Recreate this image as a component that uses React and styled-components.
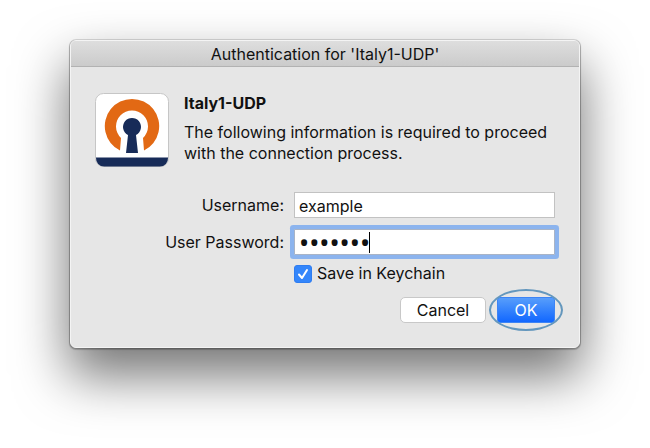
import React, { useState } from "react";
import styled, { createGlobalStyle } from "styled-components";

const GlobalStyle = createGlobalStyle`
  *, *::before, *::after { box-sizing: border-box; }
  body {
    margin: 0;
    background: #ffffff;
    color: #111111;
    font: 16px/21px Inter, "Liberation Sans", sans-serif;
  }
  input, button { font: inherit; color: inherit; }
`;

const Desktop = styled.main`
  min-height: 100vh;
  padding: 40px 70px 99px;
`;

const Dialog = styled.section`
  background: #e6e6e6;
  border-radius: 6px;
  overflow: hidden;
  border: 1px solid #f4f4f4;
  box-shadow:
    0 0 0 1px rgba(0, 0, 0, 0.12),
    0 1px 1px 1px rgba(0, 0, 0, 0.2),
    0 26px 52px 2px rgba(0, 0, 0, 0.54);
`;

const TitleBar = styled.header`
  display: flex;
  align-items: center;
  justify-content: center;
  height: 26px;
  padding-top: 1px;
  background: linear-gradient(#dedede, #cbcbcb);
  border-bottom: 1px solid #b2b2b2;
`;

const Title = styled.h1`
  margin: 0;
  font-size: 16px;
  font-weight: 400;
`;

const Body = styled.div`
  padding: 26px 24px 24px;
`;

const Intro = styled.div`
  display: flex;
  gap: 15px;
`;

const Logo = styled.svg`
  flex: none;
  display: block;
  width: 74px;
  height: 75px;
`;

const Heading = styled.h2`
  margin: 0 0 8px;
  font-size: 16px;
  font-weight: 700;
`;

const Message = styled.p`
  margin: 0;
`;

const Form = styled.form`
  margin-top: 24px;
`;

const Fields = styled.div`
  display: grid;
  grid-template-columns: 189px 1fr;
  gap: 11px 10px;
  align-items: center;
`;

const Label = styled.label`
  text-align: right;
`;

const Field = styled.div`
  position: relative;
`;

const TextInput = styled.input`
  display: block;
  width: 100%;
  height: 26px;
  padding: 2px 4px 0;
  border: 1px solid #c2c2c2;
  background: #ffffff;
  outline: none;
  border-radius: 0;
`;

const PasswordInput = styled(TextInput)`
  padding-top: 0;
  font-family: "Noto Sans", sans-serif;
  font-size: 27px;
  border-color: #a9b4c6;
  border-radius: 1px;
  box-shadow: 0 0 0 4px #8cb4ee;
`;

const Caret = styled.span`
  position: absolute;
  left: 75px;
  top: 3px;
  width: 1px;
  height: 21px;
  background: #000000;
`;

const CheckRow = styled.label`
  display: flex;
  align-items: center;
  gap: 5px;
  margin: 8px 0 0 199px;
`;

const CheckBox = styled.span`
  display: grid;
  width: 18px;
  height: 18px;

  > * { grid-area: 1 / 1; }
`;

const CheckInput = styled.input`
  appearance: none;
  width: 18px;
  height: 18px;
  margin: 0;
  border-radius: 3px;
  border: 1px solid #b8b8b8;
  background: #ffffff;

  &:checked {
    border-color: #2f7df0;
    background: #3486fb;
  }
  &:not(:checked) + svg { display: none; }
`;

const Tick = styled.svg`
  width: 18px;
  height: 18px;
  pointer-events: none;
`;

const Actions = styled.div`
  display: flex;
  justify-content: flex-end;
  gap: 11px;
  margin-top: 13px;
`;

const Button = styled.button`
  width: ${(p) => (p.$primary ? 58 : 86)}px;
  height: 26px;
  padding: 0;
  border-radius: ${(p) => (p.$primary ? 3 : 5)}px;
  border: 1px solid ${(p) => (p.$primary ? "#3d84f5" : "#c8c8c8")};
  background: ${(p) => (p.$primary ? "linear-gradient(#5aa0fb, #0f65ff)" : "#ffffff")};
  background-origin: border-box;
  color: ${(p) => (p.$primary ? "#ffffff" : "#111111")};
`;

const Highlighted = styled.span`
  position: relative;
  display: flex;

  &::after {
    content: "";
    position: absolute;
    inset: -8px;
    border: 2px solid #6497bd;
    border-radius: 50%;
    pointer-events: none;
  }
`;

export default function App() {
  const [username, setUsername] = useState("example");
  const [password, setPassword] = useState("example");
  return (
    <>
      <GlobalStyle />
      <Desktop>
        <Dialog role="dialog" aria-labelledby="dialog-title">
          <TitleBar>
            <Title id="dialog-title">Authentication for 'Italy1-UDP'</Title>
          </TitleBar>
          <Body>
            <Intro>
              <Logo viewBox="0 0 74 75" aria-hidden="true">
                <rect x="0.5" y="0.5" width="73" height="73" rx="8" fill="#fff" stroke="#c6c6c6" />
                <path d="M1 64.500H73V65A8 8 0 0 1 65 73.500H9A8 8 0 0 1 1 65Z" fill="#172b58" />
                <path d="M25 57.500A27.200 27.200 0 1 1 49 57.500L48 45A16 16 0 1 0 26 45Z" fill="#e26914" />
                <path d="M31 60L33 42A9 9 0 1 1 41 42L43 60Z" fill="#172b58" />
              </Logo>
              <div>
                <Heading>Italy1-UDP</Heading>
                <Message>The following information is required to proceed with the connection process.</Message>
              </div>
            </Intro>
            <Form onSubmit={(e) => e.preventDefault()}>
              <Fields>
                <Label htmlFor="username">Username:</Label>
                <TextInput id="username" value={username} onChange={(e) => setUsername(e.target.value)} />
                <Label htmlFor="password">User Password:</Label>
                <Field>
                  <PasswordInput
                    id="password"
                    type="password"
                    value={password}
                    onChange={(e) => setPassword(e.target.value)}
                  />
                  <Caret />
                </Field>
              </Fields>
              <CheckRow>
                <CheckBox>
                  <CheckInput type="checkbox" defaultChecked />
                  <Tick viewBox="0 0 18 18" aria-hidden="true">
                    <path d="M5 9.500L8 13L13 5" fill="none" stroke="#fff" strokeWidth="2" strokeLinecap="round" strokeLinejoin="round" />
                  </Tick>
                </CheckBox>
                Save in Keychain
              </CheckRow>
              <Actions>
                <Button type="button">Cancel</Button>
                <Highlighted>
                  <Button type="submit" $primary>OK</Button>
                </Highlighted>
              </Actions>
            </Form>
          </Body>
        </Dialog>
      </Desktop>
    </>
  );
}
